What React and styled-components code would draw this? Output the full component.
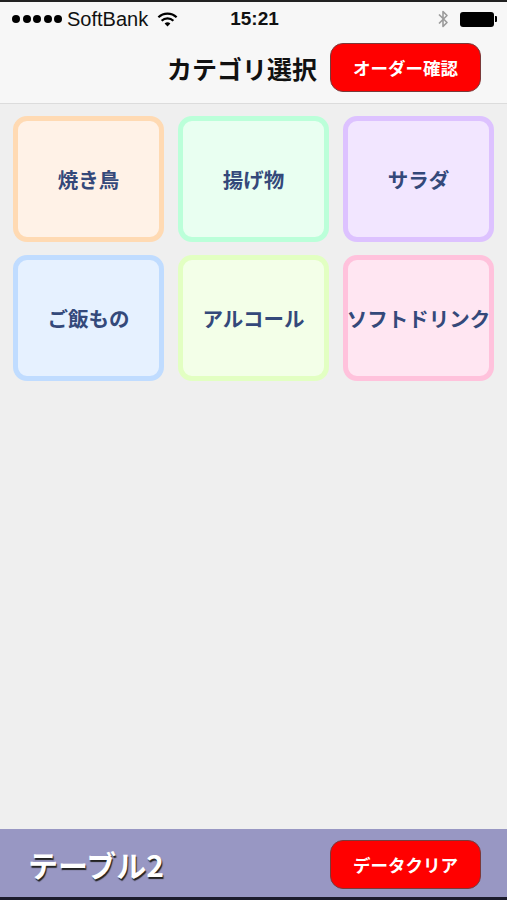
import styled, { createGlobalStyle } from "styled-components";

const categories = [
    { id: 1, name: "焼き鳥", border: "#ffdab3", bg: "#fff2e7" },
    { id: 2, name: "揚げ物", border: "#bbffd9", bg: "#e9fff1" },
    { id: 3, name: "サラダ", border: "#ddc2ff", bg: "#f2e6ff" },
    { id: 4, name: "ご飯もの", border: "#c0dcff", bg: "#e6f1ff" },
    { id: 5, name: "アルコール", border: "#e2ffc2", bg: "#f3ffe8" },
    { id: 6, name: "ソフトドリンク", border: "#ffc2dc", bg: "#ffe6f2" },
];

const JP = `"Noto Sans CJK JP", "Noto Sans", "Liberation Sans", sans-serif`;

export default function App() {
    return (
        <>
            <GlobalStyle />
            <Page>
                <Header>
                    <StatusBar>
                        <StatusLeft>
                            <Dots>
                                {[0, 1, 2, 3, 4].map(i => <Dot key={i} />)}
                            </Dots>
                            <Carrier>SoftBank</Carrier>
                            <svg width="21" height="15" viewBox="0 0 19 14">
                                <path d="M1 5 A12 12 0 0 1 18 5" stroke="#000" strokeWidth="2" fill="none" />
                                <path d="M4 8.2 A8 8 0 0 1 15 8.2" stroke="#000" strokeWidth="2" fill="none" />
                                <path d="M9.5 13.5 L6.8 10.8 A4 4 0 0 1 12.2 10.8 Z" fill="#000" />
                            </svg>
                        </StatusLeft>
                        <Time>15:21</Time>
                        <StatusRight>
                            <svg width="12" height="20" viewBox="0 0 12 20">
                                <path d="M2 5.5 L10 13.5 L6 17.5 L6 2.5 L10 6.5 L2 14.5" stroke="#9a9a9a" strokeWidth="1.6" fill="none" strokeLinejoin="round" />
                            </svg>
                            <Battery>
                                <BatteryBody />
                                <BatteryNub />
                            </Battery>
                        </StatusRight>
                    </StatusBar>
                    <NavBar>
                        <Title>カテゴリ選択</Title>
                        <RedButton>オーダー確認</RedButton>
                    </NavBar>
                </Header>
                <Content>
                    <Grid>
                        {categories.map(category =>
                            <Card key={category.id} border={category.border} bg={category.bg}>
                                {category.name}
                            </Card>
                        )}
                    </Grid>
                </Content>
                <Footer>
                    <TableName>テーブル2</TableName>
                    <RedButton>データクリア</RedButton>
                </Footer>
            </Page>
        </>
    )
}

const GlobalStyle = createGlobalStyle`
    * {
        box-sizing: border-box;
    }
    body {
        margin: 0;
        background: #efefef;
        font-family: ${JP};
    }
`;

const Page = styled.div`
    height: 900px;
    display: flex;
    flex-direction: column;
    background: #efefef;
    border-top: 2px solid #222;
    border-bottom: 3px solid #1c1c2c;
`;

const Header = styled.header`
    background: #f7f7f7;
    border-bottom: 1px solid #dcdcdc;
`;

const StatusBar = styled.div`
    height: 34px;
    display: grid;
    grid-template-columns: 1fr auto 1fr;
    align-items: center;
    padding: 0 10px 0 12px;
`;

const StatusLeft = styled.div`
    display: flex;
    align-items: center;
    gap: 5px;
`;

const Dots = styled.div`
    display: flex;
    gap: 2.5px;
`;

const Dot = styled.span`
    width: 8px;
    height: 8px;
    border-radius: 50%;
    background: #000;
`;

const Carrier = styled.span`
    font-family: "Liberation Sans", Arial, sans-serif;
    font-size: 20px;
    color: #111;
    margin-right: 4px;
`;

const Time = styled.span`
    font-family: "Liberation Sans", Arial, sans-serif;
    font-size: 19px;
    font-weight: 700;
    color: #111;
`;

const StatusRight = styled.div`
    display: flex;
    justify-content: flex-end;
    align-items: center;
    gap: 11px;
`;

const Battery = styled.div`
    display: flex;
    align-items: center;
`;

const BatteryBody = styled.div`
    width: 34px;
    height: 15px;
    border-radius: 3px;
    background: #000;
`;

const BatteryNub = styled.div`
    width: 2px;
    height: 6px;
    background: #000;
    border-radius: 0 1px 1px 0;
    margin-left: 1px;
`;

const NavBar = styled.div`
    height: 67px;
    display: flex;
    justify-content: flex-end;
    align-items: center;
    gap: 13px;
    padding: 0 26px 4px 0;
`;

const Title = styled.h1`
    margin: 0;
    font-size: 25px;
    font-weight: 700;
    color: #111;
`;

const RedButton = styled.button`
    width: 151px;
    height: 49px;
    border-radius: 13px;
    border: 1.5px solid #7a3a3a;
    background: #ff0000;
    color: #fff;
    font-family: ${JP};
    font-size: 17.5px;
    font-weight: 700;
    cursor: pointer;
`;

const Content = styled.main`
    flex: 1;
    padding: 12px 13px;
`;

const Grid = styled.div`
    display: grid;
    grid-template-columns: repeat(3, 151px);
    grid-auto-rows: 126px;
    gap: 13px 14px;
`;

const Card = styled.div`
    display: flex;
    justify-content: center;
    align-items: center;
    border: 5px solid ${props => props.border};
    background: ${props => props.bg};
    border-radius: 14px;
    color: #34497a;
    font-size: 20.5px;
    font-weight: 700;
    white-space: nowrap;
`;

const Footer = styled.footer`
    height: 68px;
    background: #9897c3;
    display: flex;
    justify-content: space-between;
    align-items: center;
    padding: 2px 26px 0 28px;
`;

const TableName = styled.span`
    color: #fff;
    font-size: 30px;
    font-weight: 700;
    text-shadow: 1px 2px 1px #222;
`;
